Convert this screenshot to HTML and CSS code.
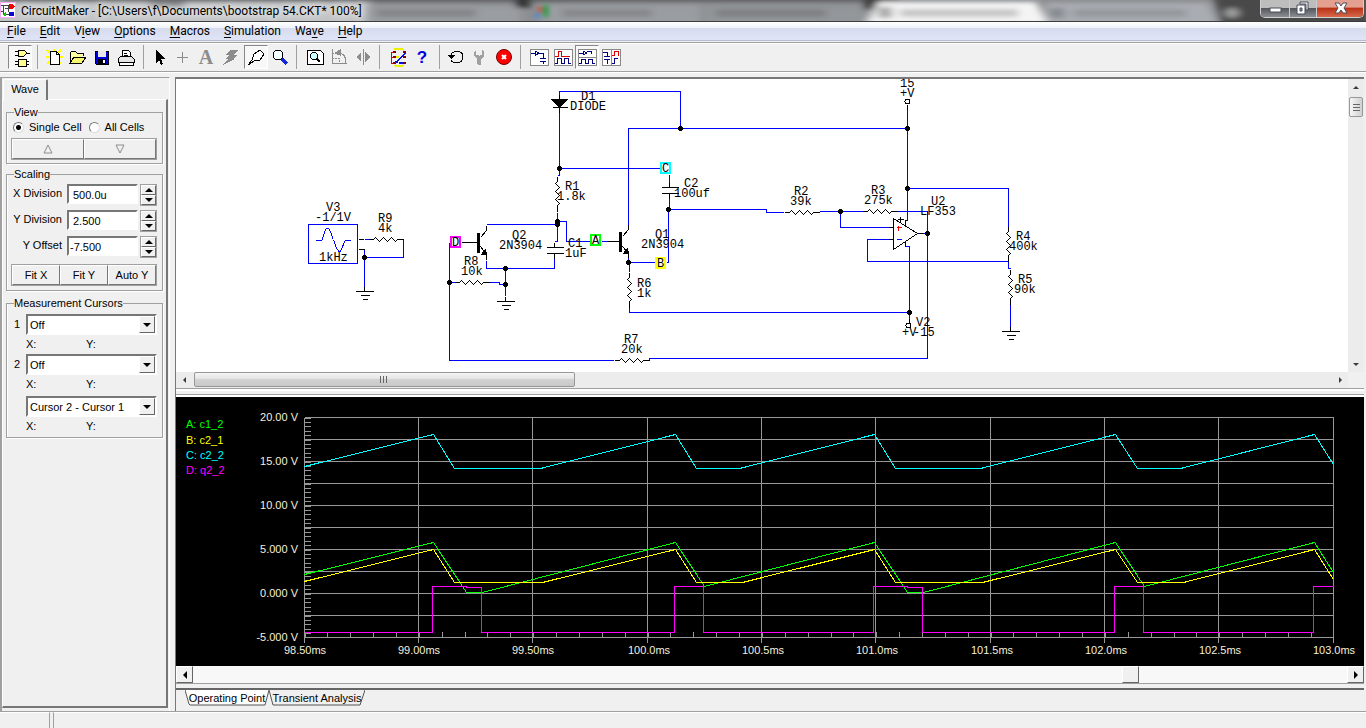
FILE: index.html
```html
<!DOCTYPE html>
<html lang="en">
<head>
<meta charset="utf-8">
<title>CircuitMaker</title>
<link rel="stylesheet" href="styles.css">
</head>
<body>
<div class="app">
  <header class="titlebar">
    <svg class="glass" viewBox="0 0 1366 21" preserveAspectRatio="none" aria-hidden="true">
      <defs><filter id="soft" x="-5%" y="-50%" width="110%" height="200%"><feGaussianBlur stdDeviation="4 2"/></filter></defs>
      <rect width="1366" height="21" fill="#8d8f92"/>
      <g filter="url(#soft)">
        <rect x="-10" y="-4" width="380" height="30" fill="#c2c4c6"/>
        <rect x="150" y="-4" width="34" height="12" fill="#85878a"/>
        <rect x="0" y="-6" width="900" height="8" fill="#5f6163"/>
        <rect x="366" y="6" width="154" height="20" fill="#9a9da1"/>
        <rect x="376" y="9" width="100" height="8" fill="#84868a"/>
        <rect x="516" y="-4" width="14" height="12" fill="#333"/>
        <rect x="540" y="5" width="160" height="20" fill="#9a9da1"/>
        <rect x="562" y="9" width="90" height="8" fill="#86888c"/>
        <rect x="706" y="6" width="160" height="20" fill="#93969a"/>
        <rect x="716" y="9" width="110" height="8" fill="#7f8185"/>
        <rect x="864" y="-4" width="16" height="14" fill="#3b3b3b"/>
        <path d="M866 24L878 2H1036L1048 24z" fill="#f4f4f4"/>
        <rect x="878" y="7" width="14" height="11" fill="#a8a8a8"/>
        <rect x="900" y="9" width="118" height="8" fill="#c8c8c8"/>
        <path d="M1046 24L1046 3H1208L1218 24z" fill="#a9adb3"/>
        <rect x="1050" y="8" width="14" height="10" fill="#85888d"/>
        <rect x="1074" y="9" width="112" height="8" fill="#95989d"/>
        <path d="M1212 -6H1370V26H1222z" fill="#484848"/>
        <ellipse cx="1232" cy="13" rx="7" ry="5" fill="#a0a0a0"/>
      </g>
      <g class="spot">
        <path d="M537 7h6v5h-6z" fill="#c25a48"/><path d="M543 5h6v12h-6z" fill="#3f9b58"/><path d="M534 13h7v5h-7z" fill="#5b8ac0"/>
      </g>
    </svg>
    <svg class="logo" viewBox="0 0 16 16" shape-rendering="crispEdges" aria-hidden="true">
      <rect width="16" height="16" fill="#f7a8f2"/><rect x="1" y="1" width="14" height="14" fill="#fff"/>
      <path d="M1 3h8M3 3v9M5 6h5M8 3v7M1 9h2M3 12h8" stroke="#444" fill="none"/>
      <path d="M9 2h3l3 2-3 3H9z" fill="#f00000"/><path d="M9 10h4l1 1v3H9z" fill="#0808d0"/><path d="M2 13l4-4v5z" fill="#0c0"/>
    </svg>
    <h1 class="title">CircuitMaker - [C:\Users\f\Documents\bootstrap 54.CKT* 100%]</h1>
    <div class="winbtns">
      <button class="win" aria-label="Minimize"><svg width="28" height="17"><rect x="9" y="8" width="11" height="4" fill="#fff" stroke="#4a4f5c"/></svg></button>
      <button class="win" aria-label="Restore"><svg width="26" height="17" fill="none"><path d="M10 2h8v8h-2V4h-6zM7 5h8v9H7z" fill="#fff" stroke="#4a4f5c"/><path d="M10 8h2v3h-2z" fill="#8d929d" stroke="#4a4f5c"/></svg></button>
      <button class="win close" aria-label="Close"><svg width="46" height="17"><path d="M18 3h4l2 3 2-3h4l-3 5 3 5h-4l-2-3-2 3h-4l3-5z" fill="#fff" stroke="#4a4f5c"/></svg></button>
    </div>
  </header>

  <nav class="menubar">
    <button><u>F</u>ile</button><button><u>E</u>dit</button><button>V<u>i</u>ew</button><button><u>O</u>ptions</button><button><u>M</u>acros</button><button><u>S</u>imulation</button><button>Wa<u>v</u>e</button><button><u>H</u>elp</button>
  </nav>

  <div class="toolbar" role="toolbar">
    <button class="tool on" aria-label="Parts"><svg viewBox="0 0 24 24"><g transform="translate(1 -1)"><path d="M6 7h3M6 11h3M18 9h3M6 17h3M6 20h3M17 17h3M17 20h3" stroke="#000"/><path d="M9 6h6l3 3-3 3H9z" fill="#ffff90" stroke="#000"/><path d="M9 15h3l1 1 1-1h3v7H9z" fill="#ffff90" stroke="#000"/></g></svg></button>
    <i class="sep"></i>
    <button class="tool" aria-label="New"><svg viewBox="0 0 24 24"><path d="M5 5l14 14M19 5L5 19M12 4v3M4 12h17" stroke="#ff0" stroke-width="2"/><path d="M8 6h6l3 3v10H8z" fill="#fff" stroke="#000"/><path d="M14 6v3h3" fill="none" stroke="#000"/></svg></button>
    <button class="tool" aria-label="Open"><svg viewBox="0 0 24 24"><path d="M4 18V8l2-2h3l2 2h6v3" fill="#ffffa0" stroke="#000"/><path d="M4 18l4-6h12l-4 6z" fill="#f4f470" stroke="#000"/></svg></button>
    <button class="tool" aria-label="Save"><svg viewBox="0 0 24 24"><path d="M5 6h13v13H6l-1-1z" fill="#0000d8" stroke="#000"/><path d="M8 6h8v6H8z" fill="#e8e8e8"/><path d="M8 14h8v5H8z" fill="#000"/><path d="M13 15h2v3h-2z" fill="#fff"/></svg></button>
    <button class="tool" aria-label="Print"><svg viewBox="0 0 24 24"><path d="M8 12V5h6l2 2v5" fill="#fff" stroke="#000"/><path d="M10 8h3M10 10h4" stroke="#000"/><path d="M4 14l3-3h10l3 3v3H4z" fill="#e4e4e4" stroke="#000"/><path d="M5 17h14v3H5z" fill="#fff" stroke="#000"/></svg></button>
    <i class="sep"></i>
    <button class="tool" aria-label="Select"><svg viewBox="0 0 24 24"><path d="M8 5v13l3-3 2 5 2-1-2-5h4z" fill="#000"/></svg></button>
    <button class="tool" aria-label="Wire"><svg viewBox="0 0 24 24"><path d="M10 7v11M5 12h11" stroke="#8c8c8c"/></svg></button>
    <button class="tool" aria-label="Text"><svg viewBox="0 0 24 24"><text x="10" y="19" text-anchor="middle" class="bigA">A</text></svg></button>
    <button class="tool" aria-label="Delete"><svg viewBox="0 0 24 24"><path d="M10 5h8l-4 5h3l-4 4h2L3 20l5-6H5l4-4H6z" fill="#8c8c8c"/></svg></button>
    <button class="tool on" aria-label="Probe"><svg viewBox="0 0 24 24"><path d="M4 20l4-5 2-6 6-4 4 4-4 6-6 1z" fill="#fff" stroke="#000"/><path d="M4 20l5-4" stroke="#000"/></svg></button>
    <button class="tool" aria-label="Zoom"><svg viewBox="0 0 24 24"><circle cx="10" cy="10" r="5" fill="#f4ffff" stroke="#000"/><path d="M14 14l5 5" stroke="#1428d8" stroke-width="3"/></svg></button>
    <i class="sep wide"></i>
    <button class="tool" aria-label="Fit"><svg viewBox="0 0 24 24"><path d="M4 5h13l3 3v11H4z" fill="#fff" stroke="#000"/><circle cx="11" cy="11" r="3.5" fill="#cff" stroke="#000"/><path d="M14 14l3 3" stroke="#000" stroke-width="2"/></svg></button>
    <button class="tool" aria-label="Rotate"><svg viewBox="0 0 24 24" fill="none" stroke="#8c8c8c"><path d="M5 4v14h15" /><path d="M5 8h6M5 13h7v6" stroke-dasharray="2 1"/><path d="M11 8c5 0 8 3 8 10"/><path d="M8 8l5-3v5z" fill="#8c8c8c"/></svg></button>
    <button class="tool" aria-label="Mirror"><svg viewBox="0 0 24 24"><path d="M12 4v16" stroke="#8c8c8c"/><path d="M10 7v10l-5-5zM14 7v10l5-5z" fill="#8c8c8c"/></svg></button>
    <i class="sep wide"></i>
    <button class="tool" aria-label="Nets"><svg viewBox="0 0 24 24" fill="none"><path d="M8 5l1-1h7l2 1M9 20l1 1h6l2-1M10 12h3" stroke="#ee0" stroke-width="2"/><path d="M8 7H5v11h4M5 12h4" stroke="#e00000"/><path d="M9 17h2l8-9M13 18h5" stroke="#0010e0" stroke-width="1.5"/><path d="M7 6h3v2H7zM17 6h3v2h-3zM7 11h3v2H7zM17 11h3v2h-3zM7 17h3v2H7zM17 17h3v2h-3z" fill="#800000"/></svg></button>
    <button class="tool" aria-label="Help"><svg viewBox="0 0 24 24"><text x="12" y="18" text-anchor="middle" class="qmark">?</text></svg></button>
    <i class="sep"></i>
    <button class="tool" aria-label="Reset"><svg viewBox="0 0 24 24"><path d="M7 11C8 4 19 5 19 12S9 19 7 15" fill="none" stroke="#000"/><path d="M3 10h8l-4 4z" fill="#000"/></svg></button>
    <button class="tool" aria-label="Step"><svg viewBox="0 0 24 24"><path d="M8 5L6 7v4l3 3v5l1 1h2l1-1v-5l3-3V7l-2-2v5h-2l-1 1-1-1H8z" fill="#a0a0a0"/></svg></button>
    <button class="tool" aria-label="Stop"><svg viewBox="0 0 24 24" class="smooth"><circle cx="12" cy="12" r="7.5" fill="#f00" stroke="#700"/><path d="M10 10l4 4M14 10l-4 4" stroke="#fff" stroke-width="2"/></svg></button>
    <i class="sep wide"></i>
    <button class="tool" aria-label="Schematic"><svg viewBox="0 0 24 24" fill="none"><path d="M3 4h18v16H3z" fill="#fff" stroke="#888"/><path d="M4 8h4m0-2v5l4-3zm4 2h4v5m-3 0h6m-6 3h6m-3 0v3" stroke="#000080"/></svg></button>
    <button class="tool" aria-label="Waves"><svg viewBox="0 0 24 24" fill="none"><path d="M3 4h18v16H3z" fill="#fff" stroke="#888"/><path d="M4 11h3V6h3v5h9" stroke="#e00000"/><path d="M4 18h2v-5h4v5h3v-5h4v5h3" stroke="#000080"/></svg></button>
    <button class="tool on" aria-label="Split horizontal"><svg viewBox="0 0 24 24" fill="none"><path d="M3 4h18v16H3z" fill="#fff" stroke="#888"/><path d="M3 12h18" stroke="#888"/><path d="M4 8h4m0-2v4l4-2zm4 0h4v3M4 18h2v-4h4v4h3v-4h4v4h3" stroke="#000080"/></svg></button>
    <button class="tool" aria-label="Split vertical"><svg viewBox="0 0 24 24" fill="none"><path d="M3 4h18v16H3z" fill="#fff" stroke="#888"/><path d="M12 4v16" stroke="#888"/><path d="M4 7h4v4m-3 0h6m-6 3h6m-3 0v5M13 18h2v-5h4" stroke="#000080"/><path d="M13 10h2V6h4v4h1" stroke="#e00000"/></svg></button>
  </div>

  <main class="work">
    <aside class="side">
      <div class="tabs"><button class="tab">Wave</button></div>
      <div class="page">
        <fieldset class="group view">
          <legend>View</legend>
          <div class="radios">
            <label><input type="radio" name="cells" checked> Single Cell</label>
            <label><input type="radio" name="cells"> All Cells</label>
          </div>
          <div class="btns">
            <button aria-label="Previous cell"><svg width="11" height="10"><path d="M5 1L9 9H1z" fill="none" stroke="#8c8c8c"/></svg></button>
            <button aria-label="Next cell"><svg width="11" height="10"><path d="M5 9L9 1H1z" fill="none" stroke="#8c8c8c"/></svg></button>
          </div>
        </fieldset>
        <fieldset class="group scaling">
          <legend>Scaling</legend>
          <div class="row"><label for="xd">X Division</label><input id="xd" value="500.0u"><span class="spin"><button aria-label="Up"><i class="up"></i></button><button aria-label="Down"><i class="dn"></i></button></span></div>
          <div class="row"><label for="yd">Y Division</label><input id="yd" value="2.500"><span class="spin"><button aria-label="Up"><i class="up"></i></button><button aria-label="Down"><i class="dn"></i></button></span></div>
          <div class="row"><label for="yo">Y Offset</label><input id="yo" class="neg" value="-7.500"><span class="spin"><button aria-label="Up"><i class="up"></i></button><button aria-label="Down"><i class="dn"></i></button></span></div>
          <div class="btns"><button>Fit X</button><button>Fit Y</button><button>Auto Y</button></div>
        </fieldset>
        <fieldset class="group cursors">
          <legend>Measurement Cursors</legend>
          <div class="crow"><label for="c1">1</label><span class="combo"><select id="c1"><option>Off</option></select><span class="drop"><i class="dn"></i></span></span></div>
          <div class="xy"><span>X:</span><span>Y:</span></div>
          <div class="crow"><label for="c2">2</label><span class="combo"><select id="c2"><option>Off</option></select><span class="drop"><i class="dn"></i></span></span></div>
          <div class="xy last"><span>X:</span><span>Y:</span></div>
          <div class="crow"><span></span><span class="combo"><select aria-label="Difference"><option>Cursor 2 - Cursor 1</option></select><span class="drop"><i class="dn"></i></span></span></div>
          <div class="xy"><span>X:</span><span>Y:</span></div>
        </fieldset>
      </div>
    </aside>

    <section class="right">
      <div class="schematic">
        <div class="canvas">
          <svg width="1172" height="293" viewBox="176 79 1172 293">
            <defs>
              <path id="rh" d="M0 0h5l2-2 4 4 4-4 4 4 4-4 4 4 2-2h6"/>
              <path id="rv" d="M0 0v5l-2 2 4 4-4 4 4 4-4 4 4 4-2 2v6"/>
              <path id="gnd" d="M0-5V0M-9 0H9M-4 4H5M-2 8H3"/>
              <path id="cap" d="M0-5V0M-8 0H9M-8 6H9M0 6v5"/>
            </defs>
            <g class="wires" transform="translate(.5 .5)">
              <path d="M308 224H357V263H308zM315 240h6C323 240 323 228 327 228S332 240 333 240 336 251 339 251 343 240 345 240H350"/>
              <path d="M364 239h6M403 239V257H364M364 249V286"/>
              <path d="M559 94V91H680V128M559 112V175H557M559 168H660M557 212V241H554M557 221H566V241H590M601 241H606"/>
              <path d="M907 128H628V224M669 174V182M669 198V209M668 209H766V212H783M819 211H862M897 211H927V358H649V360M613 360H449V242M668 209V262H666M655 262H628V257M628 262H629V271M629 307V312H909V246H905"/>
              <path d="M554 258V268H486V260M486 224H557M505 268V295M489 282H499V284H505M449 282H455"/>
              <path d="M907 109V220H906M907 188H1008V226M840 211V227H888M888 239H867V261H1008M1008 260V268H1010M1010 304V326M922 233H927M909 312V318"/>
            </g>
            <g class="parts" transform="translate(.5 .5)">
              <path d="M358 239h5M358 249h6M559 94V112M552 107H567"/>
              <path d="M551 99H567L559 107z" fill="#000"/>
              <use href="#rh" x="368" y="239"/><use href="#rh" x="454" y="282"/><use href="#rh" x="614" y="360"/><use href="#rh" x="784" y="212"/><use href="#rh" x="862" y="211"/>
              <use href="#rv" x="557" y="176"/><use href="#rv" x="629" y="272"/><use href="#rv" x="1008" y="226"/><use href="#rv" x="1010" y="269"/>
              <use href="#gnd" x="364" y="291"/><use href="#gnd" x="505" y="301"/><use href="#gnd" x="1010" y="331"/>
              <use href="#cap" x="669" y="187"/><use href="#cap" x="554" y="247"/>
              <path d="M461 242H478M480 237L486 230V225M480 246L486 254V259M606 241H620M622 236L628 229V224M622 246L628 253V257"/>
              <path d="M478 232V252M620 231V251" stroke-width="3"/>
              <path d="M486 254h-5l4-5zM628 253h-5l4-5z" fill="#000"/>
              <path d="M893 218V249L917 233zM888 227h5M888 239h5M917 233h5M906 220h-1V226M905 240V246M907 104v5M909 318v4M897 219h6M900 216v6"/>
              <circle cx="907" cy="101" r="2.5" fill="#fff"/><circle cx="908" cy="325" r="2.5" fill="#fff"/>
              <path d="M896 227h5M898 225v5" stroke="#f00"/><path d="M896 239h5" stroke="#00f"/>
            </g>
            <g class="nodes" transform="translate(.5 .5)">
              <circle cx="364" cy="257" r="2.5"/><circle cx="559" cy="168" r="2.5"/><circle cx="680" cy="128" r="2.5"/><circle cx="557" cy="221" r="2.5"/><circle cx="557" cy="224" r="2.5"/><circle cx="505" cy="268" r="2.5"/><circle cx="505" cy="284" r="2.5"/><circle cx="449" cy="282" r="2.5"/><circle cx="628" cy="262" r="2.5"/><circle cx="668" cy="209" r="2.5"/><circle cx="840" cy="211" r="2.5"/><circle cx="907" cy="128" r="2.5"/><circle cx="907" cy="188" r="2.5"/><circle cx="927" cy="233" r="2.5"/><circle cx="909" cy="312" r="2.5"/>
            </g>
            <g class="probes">
              <rect x="451" y="237" width="9" height="10" stroke="#f0f"/><rect x="591" y="235" width="9" height="10" stroke="#0f0"/><rect x="661" y="163" width="9" height="10" stroke="#0ff"/><rect x="656" y="258" width="9" height="10" stroke="#ff0"/>
            </g>
            <g class="names">
              <text x="326" y="211">V3</text><text x="315" y="221">-1/1V</text><text x="319" y="261">1kHz</text>
              <text x="378" y="222">R9</text><text x="378" y="232">4k</text>
              <text x="581" y="100">D1</text><text x="570" y="110">DIODE</text>
              <text x="565" y="190">R1</text><text x="557" y="200">1.8k</text>
              <text x="512" y="239">Q2</text><text x="499" y="249">2N3904</text>
              <text x="464" y="265">R8</text><text x="461" y="275">10k</text>
              <text x="568" y="247">C1</text><text x="565" y="257">1uF</text>
              <text x="655" y="238">Q1</text><text x="641" y="248">2N3904</text>
              <text x="684" y="187">C2</text><text x="674" y="197">100uf</text>
              <text x="637" y="287">R6</text><text x="637" y="297">1k</text>
              <text x="624" y="343">R7</text><text x="621" y="353">20k</text>
              <text x="794" y="195">R2</text><text x="790" y="205">39k</text>
              <text x="871" y="194">R3</text><text x="864" y="204">275k</text>
              <text x="900" y="87">15</text><text x="900" y="97">+V</text>
              <text x="931" y="205">U2</text><text x="920" y="215">LF353</text>
              <text x="1016" y="240">R4</text><text x="1009" y="250">400k</text>
              <text x="1018" y="283">R5</text><text x="1014" y="293">90k</text>
              <text x="916" y="326">V2</text><text x="902" y="336">+V</text><text x="913" y="336">-15</text>
              <text x="452" y="246">D</text><text x="592" y="244">A</text><text x="662" y="172">C</text><text x="657" y="267">B</text>
            </g>
          </svg>
        </div>
        <div class="vbar"><button aria-label="Scroll up"><i class="up"></i></button><span class="vthumb"></span><span class="grow"></span><button aria-label="Scroll down"><i class="dn"></i></button></div>
        <div class="hbar"><button aria-label="Scroll left"><i class="lf"></i></button><span class="hthumb"></span><span class="grow"></span><button aria-label="Scroll right"><i class="rt"></i></button></div>
      </div>
      <div class="splitter"></div>
      <div class="plot">
        <svg viewBox="176 397 1188 269" preserveAspectRatio="xMinYMin meet">
          <g class="grid" transform="translate(.5 .5)">
            <path d="M304 417H1333M304 439H1333M304 461H1333M304 483H1333M304 505H1333M304 527H1333M304 549H1333M304 571H1333M304 593H1333M304 615H1333M304 637H1333"/>
            <path d="M304 417V642M418 417V642M532 417V642M647 417V642M761 417V642M875 417V642M990 417V642M1104 417V642M1218 417V642M1333 417V642"/>
            <path d="M307 417V637" stroke-width="6" stroke-dasharray="1 3.4"/>
            <path d="M304 634H1333" stroke-width="6" stroke-dasharray="1 21.87"/>
          </g>
          <g class="traces" transform="translate(.5 .5)">
            <path stroke="#0f0" d="M304 574L433 542L466 592H482L675 542L704 586L874 542L907 592H923L1115 542L1144 586L1314 542L1333 572"/>
            <path stroke="#ff0" d="M304 581L433 549L454 582H542L675 549L696 582H742L874 549L895 582H982L1115 549L1137 582H1183L1314 549L1333 579"/>
            <path stroke="#0ff" d="M304 466L433 434L454 468H540L675 434L696 468H739L874 434L895 468H980L1115 434L1137 468H1180L1314 434L1333 464"/>
            <path stroke="#f0f" d="M304 632H432V586H466V587H481V632H674V586H703V632H873V586H907V587H922V632H1114V586H1143V632H1313V586H1333"/>
          </g>
          <g class="axis end">
            <text x="298" y="421">20.00 V</text><text x="298" y="465">15.00 V</text><text x="298" y="509">10.00 V</text><text x="298" y="553">5.000 V</text><text x="298" y="597">0.000 V</text><text x="298" y="641">-5.000 V</text>
          </g>
          <g class="axis mid">
            <text x="305" y="654">98.50ms</text><text x="419" y="654">99.00ms</text><text x="533" y="654">99.50ms</text><text x="649" y="654">100.0ms</text><text x="763" y="654">100.5ms</text><text x="877" y="654">101.0ms</text><text x="992" y="654">101.5ms</text><text x="1106" y="654">102.0ms</text><text x="1220" y="654">102.5ms</text><text x="1334" y="654">103.0ms</text>
          </g>
          <g class="keys">
            <text x="186" y="428" fill="#0f0">A: c1_2</text><text x="186" y="444" fill="#ff0">B: c2_1</text><text x="186" y="459" fill="#0ff">C: c2_2</text><text x="186" y="474" fill="#f0f">D: q2_2</text>
          </g>
        </svg>
      </div>
      <div class="pbar"><button aria-label="Scroll left"><i class="lf"></i></button><span class="grow"></span><span class="pthumb"></span><span class="tail"></span><button aria-label="Scroll right"><i class="rt"></i></button></div>
      <div class="sheets">
        <button class="sheet active"><svg viewBox="0 0 84 16" preserveAspectRatio="none"><path d="M0 0L4 14 5 15H80L84 0"/></svg><span>Operating Point</span></button>
        <button class="sheet"><svg viewBox="0 0 96 16" preserveAspectRatio="none"><path d="M0 0L4 15H91L96 0"/></svg><span>Transient Analysis</span></button>
      </div>
    </section>
  </main>
  <footer class="status"><span class="cell"></span><span class="fill"></span></footer>
</div>
</body>
</html>
```
FILE: styles.css
```css
* { box-sizing: border-box; }
body { margin: 0; background: #f0f0f0; font: 11px/13px "Liberation Sans", Arial, sans-serif; color: #000; }
button, input, select { font: inherit; color: inherit; margin: 0; padding: 0; border: 0; background: none; }
svg { display: block; }
.grow { flex: 1; }
.app { display: flex; flex-direction: column; height: 100vh; overflow: hidden; }

.titlebar { position: relative; display: flex; align-items: center; height: 22px; border-bottom: 1px solid #3c3c3c; flex: none; }
.glass { position: absolute; inset: 0; width: 100%; height: 100%; }
.spot { filter: blur(2px); }
.logo { position: relative; width: 16px; height: 16px; margin-bottom: 2px; }
.title { position: relative; flex: 1; margin: 0 0 0 5px; font: 12px/20px Roboto, "Open Sans", sans-serif; text-shadow: 0 0 6px #fff, 0 0 8px #fff; }
.winbtns { position: relative; display: flex; align-self: flex-start; margin-right: 2px; border: 1px solid #d0d0d0; border-top: 0; border-radius: 0 0 5px 5px; overflow: hidden; }
.win { border-right: 1px solid #ccc; background: linear-gradient(#bdbdbd 0 45%, #55585c 50%, #8c8f94); }
.win.close { border-right: 0; background: linear-gradient(#e3a090 0 40%, #bb3418 50%, #d8674a); }

.menubar { display: flex; gap: 14px; height: 19px; padding: 0 7px; flex: none; background: linear-gradient(#fff, #eef1f8 35%, #d6dcee 36%, #dfe5f6); border-bottom: 1px solid #b4bccf; }
.menubar button { font: 12px/19px Roboto, "Open Sans", sans-serif; }
.menubar u { text-underline-offset: 2px; }

.toolbar { display: flex; align-items: center; height: 30px; margin-top: 1px; padding: 0 8px 1px; flex: none; border-top: 1px solid #a0a0a0; border-bottom: 1px solid #a0a0a0; box-shadow: inset 0 1px #fff, 0 1px #fff; }
.tool { width: 24px; height: 24px; flex: none; }
.tool svg { width: 24px; height: 24px; shape-rendering: crispEdges; }
.tool .smooth { shape-rendering: auto; }
.tool.on { border: 1px solid; border-color: #888 #fff #fff #888; background: #f8f8f8; }
.tool.on svg { margin: -1px; }
.sep { width: 1px; height: 24px; margin: 0 4px 0 5px; background: #a0a0a0; flex: none; }
.sep.wide { margin: 0 6px 0 4px; }
.bigA { font: bold 20px "Liberation Serif", serif; fill: #8c8c8c; }
.qmark { font: bold 17px "Liberation Sans", sans-serif; fill: #0000e0; }

.work { flex: 1; display: flex; min-height: 0; padding: 5px 2px 0 0; gap: 5px; }
.side { width: 170px; flex: none; display: flex; flex-direction: column; border: solid #a0a0a0; border-width: 1px 0 0 2px; border-right: 1px solid #fff; padding: 1px 1px 3px 0; }
.tabs { display: flex; height: 20px; padding-left: 1px; }
.tab { width: 45px; height: 21px; border: solid; border-width: 1px 2px 0 1px; border-color: #fff #777 #fff #fff; border-radius: 2px 2px 0 0; background: #f0f0f0; position: relative; padding-bottom: 2px; }
.page { flex: 1; border: solid; border-width: 1px 2px 2px 1px; border-color: #fff #777 #777 #fff; padding: 6px 3px 0 3px; }
.group { margin: 0; padding: 0 4px; border: 1px solid #a0a0a0; box-shadow: inset 1px 0 #fff, 1px 1px #fff; min-width: 0; }
.group legend { padding: 0; margin-left: 3px; line-height: 13px; }
.view { height: 58px; margin-bottom: 4px; }
.scaling { height: 123px; margin-bottom: 6px; }
.cursors { height: 141px; }
.radios { display: flex; gap: 5px; height: 19px; align-items: flex-start; padding-top: 2px; }
.radios label { display: flex; align-items: center; gap: 5px; white-space: nowrap; }
.radios input { appearance: none; width: 11px; height: 11px; border: 1px solid; border-color: #777 #ddd #ddd #777; border-radius: 50%; background: #fff; margin-left: 2px; }
.radios input:checked { background: radial-gradient(#000 0 2px, #fff 3px); }
.btns { display: flex; border: 1px solid #a0a0a0; width: 146px; }
.btns button { flex: 1; height: 20px; border: 1px solid; border-color: #fff #777 #777 #fff; background: #f0f0f0; display: grid; place-items: center; }
.row { display: grid; grid-template-columns: 54px 71px 17px; column-gap: 2px; height: 26px; align-items: start; }
.row:first-of-type { margin-top: 3px; }
.row label { text-align: right; padding: 3px 3px 0 0; white-space: nowrap; }
.row input { width: 71px; height: 20px; padding: 1px 4px 0; border: 2px solid; border-color: #777 #fff #fff #777; background: #fff; }
.row .neg { padding-left: 1px; }
.spin { display: grid; grid-template-rows: 10px 10px; border: 1px solid #a0a0a0; width: 17px; }
.spin button, .drop { display: grid; place-items: center; background: #f0f0f0; border: 1px solid; border-color: #fff #666 #666 #fff; }
.up, .dn, .lf, .rt { width: 0; height: 0; border: 4px solid transparent; }
.up { border-width: 0 4px 4px; border-bottom-color: #000; }
.dn { border-width: 4px 4px 0; border-top-color: #000; }
.lf { border-width: 4px 4px 4px 0; border-right-color: #000; }
.rt { border-width: 4px 0 4px 4px; border-left-color: #000; }
.scaling .btns { margin-top: 2px; }
.crow { display: grid; grid-template-columns: 15px 131px; align-items: center; }
.crow:first-of-type { margin-top: 4px; }
.crow label { padding-left: 3px; }
.combo { display: grid; grid-template-columns: 1fr 16px; height: 21px; background: #fff; border: 2px solid; border-color: #777 #fff #fff #777; }
.combo select { appearance: none; padding: 1px 2px 0; outline: 0; }
.xy { display: grid; grid-template-columns: 60px 1fr; padding: 3px 0 0 15px; height: 19px; }
.xy.last { height: 21px; }

.right { flex: 1; min-width: 0; display: flex; flex-direction: column; border-left: 1px solid #777; }
.schematic { display: grid; grid-template: 293px 16px / minmax(0, 1fr) 16px; border-top: 2px solid #777; border-bottom: 1px solid #a0a0a0; background: #f0f0f0; }
.canvas { background: #fff; overflow: hidden; }
.wires, .parts, .nodes, .probes, .grid, .traces { shape-rendering: crispEdges; fill: none; }
.wires { stroke: #00f; }
.parts { stroke: #000; }
.nodes { fill: #000; }
.probes rect { fill: #fff; stroke-width: 2; }
.names { font: 12px "Liberation Mono", "Courier New", monospace; }
.vbar, .hbar { display: flex; background: #ececec; }
.vbar { flex-direction: column; }
.vbar button, .hbar button { width: 16px; height: 16px; display: grid; place-items: center; flex: none; }
.schematic i { opacity: .75; }
.schematic .up { border-width: 0 3px 3px; }
.schematic .dn { border-width: 3px 3px 0; }
.schematic .lf { border-width: 3px 3px 3px 0; }
.schematic .rt { border-width: 3px 0 3px 3px; }
.vthumb, .hthumb { border: 1px solid #979797; border-radius: 2px; }
.vthumb { height: 20px; margin: 2px 1px 0; background: repeating-linear-gradient(#666 0 1px, transparent 1px 3px) center/7px 7px no-repeat, linear-gradient(90deg, #f5f5f5, #d0d0d0); }
.hthumb { flex: 1; margin: 0 0 1px 2px; background: repeating-linear-gradient(90deg, #666 0 1px, transparent 1px 3px) center/8px 7px no-repeat, linear-gradient(#f5f5f5, #e4e4e4 45%, #d2d2d2 50%, #c8c8c8); }
.hbar .grow { flex: 2; }
.splitter { height: 8px; background: linear-gradient(#fff 0 2px, #f0f0f0 2px 5px, #a0a0a0 5px 6px, #fff 6px); }
.plot { flex: 1; min-height: 0; background: #000; }
.plot svg { width: 100%; height: 100%; }
.grid { stroke: #989898; }
.axis { font: 11px "Liberation Sans", Arial, sans-serif; fill: #f5f0dc; }
.keys { font: 11px "Liberation Sans", Arial, sans-serif; }
.end { text-anchor: end; }
.mid { text-anchor: middle; }
.pbar { display: flex; height: 18px; border-bottom: 1px solid #a0a0a0; background: #f8f8f8; }
.pbar button, .pthumb { width: 17px; display: grid; place-items: center; background: #f0f0f0; border: 1px solid; border-color: #fff #666 #666 #fff; }
.tail { width: 208px; }
.sheets { display: flex; height: 23px; margin-top: 4px; padding-left: 9px; border-top: 2px solid #666; }
.sheet { position: relative; height: 16px; width: 84px; white-space: nowrap; }
.sheet + .sheet { width: 96px; }
.sheet svg { position: absolute; inset: 0; width: 100%; height: 100%; }
.sheet path { fill: #f0f0f0; stroke: #555; }
.sheet.active path { fill: #fff; }
.sheet span { position: relative; }

.status { display: flex; gap: 3px; height: 17px; flex: none; border-top: 1px solid #a0a0a0; }
.cell { width: 50px; border-right: 1px solid #a0a0a0; border-top: 1px solid #fff; }
.fill { flex: 1; border-left: 1px solid #a0a0a0; border-top: 1px solid #fff; }
```
